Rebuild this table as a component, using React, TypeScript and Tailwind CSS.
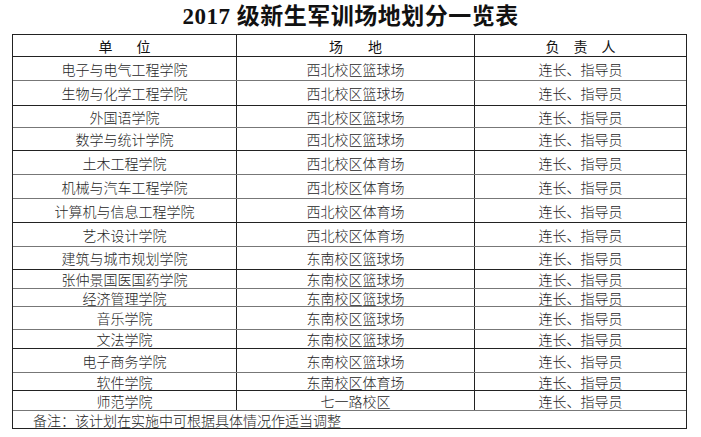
import React from "react";

type Row = { a: string; b: string; c: string; h: number; dark: boolean };

const rows: Row[] = [
  { a: "电子与电气工程学院", b: "西北校区篮球场", c: "连长、指导员", h: 24, dark: true },
  { a: "生物与化学工程学院", b: "西北校区篮球场", c: "连长、指导员", h: 25, dark: false },
  { a: "外国语学院", b: "西北校区篮球场", c: "连长、指导员", h: 22, dark: true },
  { a: "数学与统计学院", b: "西北校区篮球场", c: "连长、指导员", h: 23, dark: false },
  { a: "土木工程学院", b: "西北校区体育场", c: "连长、指导员", h: 24, dark: true },
  { a: "机械与汽车工程学院", b: "西北校区体育场", c: "连长、指导员", h: 24, dark: false },
  { a: "计算机与信息工程学院", b: "西北校区体育场", c: "连长、指导员", h: 24, dark: false },
  { a: "艺术设计学院", b: "西北校区体育场", c: "连长、指导员", h: 24, dark: true },
  { a: "建筑与城市规划学院", b: "东南校区篮球场", c: "连长、指导员", h: 23, dark: false },
  { a: "张仲景国医国药学院", b: "东南校区篮球场", c: "连长、指导员", h: 19, dark: true },
  { a: "经济管理学院", b: "东南校区篮球场", c: "连长、指导员", h: 18, dark: false },
  { a: "音乐学院", b: "东南校区篮球场", c: "连长、指导员", h: 23, dark: false },
  { a: "文法学院", b: "东南校区篮球场", c: "连长、指导员", h: 19, dark: false },
  { a: "电子商务学院", b: "东南校区篮球场", c: "连长、指导员", h: 24, dark: true },
  { a: "软件学院", b: "东南校区体育场", c: "连长、指导员", h: 18, dark: false },
  { a: "师范学院", b: "七一路校区", c: "连长、指导员", h: 20, dark: true },
];

export default function App() {
  return (
    <div
      className="relative w-[701px] h-[437px] overflow-hidden bg-white text-[#262626]"
      style={{ fontFamily: '"Noto Sans CJK SC", sans-serif' }}
    >
      <div
        className="h-[34px] flex items-center justify-center text-[23px] font-bold text-[#111] tracking-[0.5px]"
        style={{ fontFamily: '"Liberation Serif", "Noto Sans CJK SC", serif' }}
      >
        2017 级新生军训场地划分一览表
      </div>
      <div className="ml-[12px] w-[675px] border-l border-r border-b border-[#222] text-[14px] leading-none font-light">
        <div className="grid grid-cols-[223px_238px_212px] h-[22px] border-t border-[#222] font-normal text-[#111]">
          <div className="flex items-center justify-center gap-[24px]">
            <span>单</span>
            <span>位</span>
          </div>
          <div className="flex items-center justify-center gap-[25px] border-l border-[#222]">
            <span>场</span>
            <span>地</span>
          </div>
          <div className="flex items-center justify-center gap-[14px] border-l border-[#222]">
            <span>负</span>
            <span>责</span>
            <span>人</span>
          </div>
        </div>
        {rows.map((r, i) => (
          <div
            key={i}
            className={
              "grid grid-cols-[223px_238px_212px] border-t " +
              (r.dark ? "border-[#222]" : "border-[#777]")
            }
            style={{ height: r.h }}
          >
            <div className="flex items-center justify-center">{r.a}</div>
            <div className="flex items-center justify-center border-l border-[#222]">{r.b}</div>
            <div className="flex items-center justify-center border-l border-[#222]">{r.c}</div>
          </div>
        ))}
        <div className="h-[18px] border-t border-[#777] flex items-center pl-[20px]">
          备注：该计划在实施中可根据具体情况作适当调整
        </div>
      </div>
    </div>
  );
}
